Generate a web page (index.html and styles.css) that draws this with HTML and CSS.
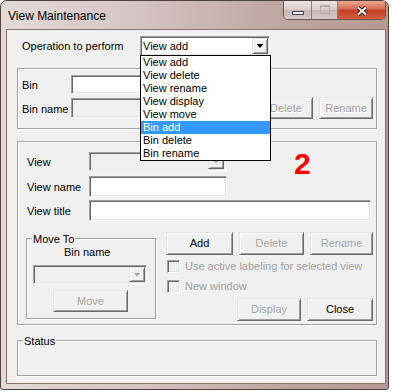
FILE: index.html
```html
<!DOCTYPE html>
<html lang="en">
<head>
  <meta charset="UTF-8" />
  <meta name="viewport" content="width=device-width, initial-scale=1.0" />
  <title>View Maintenance</title>
  <link rel="stylesheet" href="styles.css">
</head>
<body>
  <div class="window">
    <div class="titlebar">
      <span class="title">View Maintenance</span>
      <div class="caption-buttons">
        <span class="cap-btn cap-min"><span class="min-glyph"></span></span>
        <span class="cap-btn cap-max"><span class="max-glyph"></span></span>
        <span class="cap-btn cap-close">
          <svg width="12" height="10" viewBox="0 0 12 10">
            <path d="M2 1.5 L10 8.5 M10 1.5 L2 8.5" stroke="#3e1810" stroke-width="4"/>
            <path d="M2 1.5 L10 8.5 M10 1.5 L2 8.5" stroke="#fff" stroke-width="2"/>
          </svg>
        </span>
      </div>
    </div>

    <div class="client">
      <div class="op-row">
        <span class="op-label">Operation to perform</span>
        <div class="combo op-combo">
          <span class="combo-text">View add</span>
          <span class="combo-btn"><span class="arrow"></span></span>
          <ul class="droplist">
            <li>View add</li>
            <li>View delete</li>
            <li>View rename</li>
            <li>View display</li>
            <li>View move</li>
            <li class="sel">Bin add</li>
            <li>Bin delete</li>
            <li>Bin rename</li>
          </ul>
        </div>
      </div>

      <div class="group bin-group">
        <div class="row">
          <span class="lbl">Bin</span>
          <span class="edit bin-edit"></span>
        </div>
        <div class="row bin-row2">
          <span class="lbl">Bin name</span>
          <span class="edit disabled bin-name-edit"></span>
          <div class="bin-btns">
            <button disabled>Add</button>
            <button disabled>Delete</button>
            <button disabled>Rename</button>
          </div>
        </div>
      </div>

      <div class="group view-group">
        <span class="marker">2</span>
        <div class="row">
          <span class="lbl">View</span>
          <div class="combo disabled view-combo">
            <span class="combo-text"></span>
            <span class="combo-btn"><span class="arrow"></span></span>
          </div>
        </div>
        <div class="row view-row2">
          <span class="lbl">View name</span>
          <span class="edit view-name-edit"></span>
        </div>
        <div class="row view-row3">
          <span class="lbl">View title</span>
          <span class="edit view-title-edit"></span>
        </div>

        <div class="lower">
          <div class="group move-group">
            <span class="legend">Move To</span>
            <div class="move-label">Bin name</div>
            <div class="combo disabled move-combo">
              <span class="combo-text"></span>
              <span class="combo-btn"><span class="arrow"></span></span>
            </div>
            <button class="move-btn" disabled>Move</button>
          </div>

          <div class="actions">
            <div class="btn-row">
              <button class="w-add">Add</button>
              <button class="w-delete" disabled>Delete</button>
              <button class="w-rename" disabled>Rename</button>
            </div>
            <label class="check first"><span class="box"></span>Use active labeling for selected view</label>
            <label class="check second"><span class="box"></span>New window</label>
            <div class="btn-row end">
              <button class="w-display" disabled>Display</button>
              <button class="w-close">Close</button>
            </div>
          </div>
        </div>
      </div>

      <div class="group status-group">
        <span class="legend">Status</span>
      </div>
    </div>
  </div>
</body>
</html>
```

FILE: styles.css
```css
* {
  margin: 0;
  padding: 0;
  box-sizing: border-box;
}

body {
  background: #fff;
  font-family: "Liberation Sans", Arial, sans-serif;
  font-size: 11px;
  line-height: 13px;
  color: #000;
}

/* window frame */
.window {
  width: 389px;
  height: 390px;
  display: flex;
  flex-direction: column;
  border: 1px solid #4d4240;
  border-radius: 7px 7px 3px 3px;
  background: linear-gradient(90deg, #e2dad9 0%, #d4c5c3 35%, #c0a8a3 70%, #b49893 100%);
}

.titlebar {
  flex: none;
  height: 28px;
  display: flex;
  justify-content: space-between;
  padding: 0 2px 0 7px;
}

.title {
  margin-top: 8px;
  font-size: 12px;
  line-height: 14px;
}

.caption-buttons {
  display: flex;
  height: 19px;
  border: 1px solid #6b5552;
  border-top: none;
  border-radius: 0 0 5px 5px;
  overflow: hidden;
}

.cap-btn {
  display: flex;
  align-items: center;
  justify-content: center;
}

.cap-min, .cap-max {
  background: linear-gradient(#ebe4e3, #d9cdcb 48%, #c7b6b3 52%, #d6cac8);
  border-right: 1px solid #8c7874;
}

.cap-min { width: 28px; }
.cap-max { width: 26px; }

.cap-close {
  width: 47px;
  background: linear-gradient(#e9a996, #d76c53 45%, #c33f24 52%, #d35e40);
}

.cap-close svg { margin-top: 1px; }

.min-glyph {
  width: 12px;
  height: 4px;
  margin-top: 6px;
  background: #fff;
  border: 1px solid #3c4450;
}

.max-glyph {
  width: 10px;
  height: 9px;
  margin-top: -1px;
  border: 1px solid #b9aba9;
  border-top-width: 2px;
}

/* client area */
.client {
  flex: 1;
  margin: 0 2px 5px 5px;
  border: 1px solid #8a7470;
  background: #f0f0f0;
  padding: 0 8px 0 10px;
}

.op-row {
  display: flex;
  align-items: center;
  margin-top: 6px;
  padding-left: 5px;
}

.op-label { width: 118px; }

/* classic controls */
.edit, .combo, .box {
  background: #fff;
  border: 1px solid;
  border-color: #a0a0a0 #fff #fff #a0a0a0;
  box-shadow: inset 1px 1px #696969, inset -1px -1px #e3e3e3;
}

.edit.disabled, .combo.disabled, .box {
  background: #f0f0f0;
}

.combo {
  position: relative;
  display: flex;
  padding: 1px;
}

.combo-text {
  flex: 1;
  padding-left: 1px;
  line-height: 16px;
}

.combo-btn {
  width: 16px;
  display: flex;
  align-items: center;
  justify-content: center;
  background: #f0f0f0;
  border: 1px solid;
  border-color: #e3e3e3 #696969 #696969 #e3e3e3;
  box-shadow: inset 1px 1px #fff, inset -1px -1px #a0a0a0;
}

.arrow {
  width: 7px;
  height: 4px;
  background: #000;
  clip-path: polygon(0 0, 100% 0, 50% 100%);
}

.combo.disabled .arrow { background: #a0a0a0; }

.op-combo {
  width: 130px;
  height: 20px;
}

.droplist {
  position: absolute;
  top: 100%;
  left: -1px;
  width: 131px;
  z-index: 2;
  list-style: none;
  background: #fff;
  border: 1px solid #000;
}

.droplist li {
  height: 13px;
  padding-left: 2px;
  line-height: 13px;
}

.droplist .sel {
  background: #3399ff;
  color: #fff;
}

button {
  font: inherit;
  color: #000;
  height: 23px;
  background: #f0f0f0;
  border: 1px solid;
  border-color: #e3e3e3 #696969 #696969 #e3e3e3;
  box-shadow: inset 1px 1px #fff, inset -1px -1px #a0a0a0;
}

button:disabled {
  color: #a0a0a0;
  text-shadow: 1px 1px #fff;
}

/* group boxes */
.group {
  border: 1px solid #a0a0a0;
  box-shadow: inset 1px 1px #fff, 1px 1px #fff;
}

.legend {
  display: block;
  width: max-content;
  margin: -6px 0 -7px 5px;
  padding: 0 1px;
  background: #f0f0f0;
}

.row {
  display: flex;
  align-items: center;
}

.lbl { padding-top: 2px; }

.bin-group {
  height: 61px;
  margin-top: 12px;
  padding: 6px 3px 0 4px;
}

.bin-group .lbl { width: 49px; }

.bin-edit {
  width: 155px;
  height: 19px;
}

.bin-row2 {
  margin-top: 3px;
  height: 22px;
}

.bin-name-edit {
  width: 122px;
  height: 20px;
}

.bin-btns {
  margin-left: auto;
  display: flex;
  gap: 6px;
}

.bin-btns button {
  width: 54px;
  height: 22px;
}

.view-group {
  position: relative;
  height: 184px;
  margin-top: 12px;
  padding: 10px 3px 0 9px;
}

.view-group > .row .lbl { width: 62px; }

.marker {
  position: absolute;
  left: 276px;
  top: 7px;
  font-size: 30px;
  line-height: 30px;
  font-weight: bold;
  color: #f00;
}

.view-combo {
  width: 137px;
  height: 19px;
}

.view-row2 { margin-top: 5px; }
.view-row3 { margin-top: 3px; }

.view-name-edit {
  width: 138px;
  height: 21px;
}

.view-title-edit {
  width: 282px;
  height: 21px;
}

.lower {
  display: flex;
  align-items: flex-start;
  margin-top: 11px;
}

.move-group {
  width: 130px;
  height: 81px;
  margin: 6px 0 0 -1px;
}

.move-label {
  margin-top: 7px;
  padding-left: 37px;
}

.move-combo {
  width: 114px;
  height: 19px;
  margin: 6px 0 0 6px;
}

.move-btn {
  display: block;
  width: 75px;
  height: 22px;
  margin: 6px 0 0 26px;
}

.actions {
  width: 207px;
  margin-left: 10px;
}

.btn-row {
  display: flex;
  gap: 6px;
}

.btn-row.end {
  justify-content: flex-end;
  margin-top: 5px;
}

.w-add { width: 67px; }
.w-delete { width: 65px; }
.w-rename { width: 63px; }
.w-display { width: 64px; }
.w-close { width: 66px; }

.check {
  display: flex;
  align-items: center;
  gap: 5px;
  height: 13px;
  padding-left: 1px;
  color: #a0a0a0;
}

.check.first { margin-top: 5px; }
.check.second { margin-top: 7px; }

.box {
  width: 13px;
  height: 13px;
}

.status-group {
  height: 36px;
  margin-top: 15px;
}
```
